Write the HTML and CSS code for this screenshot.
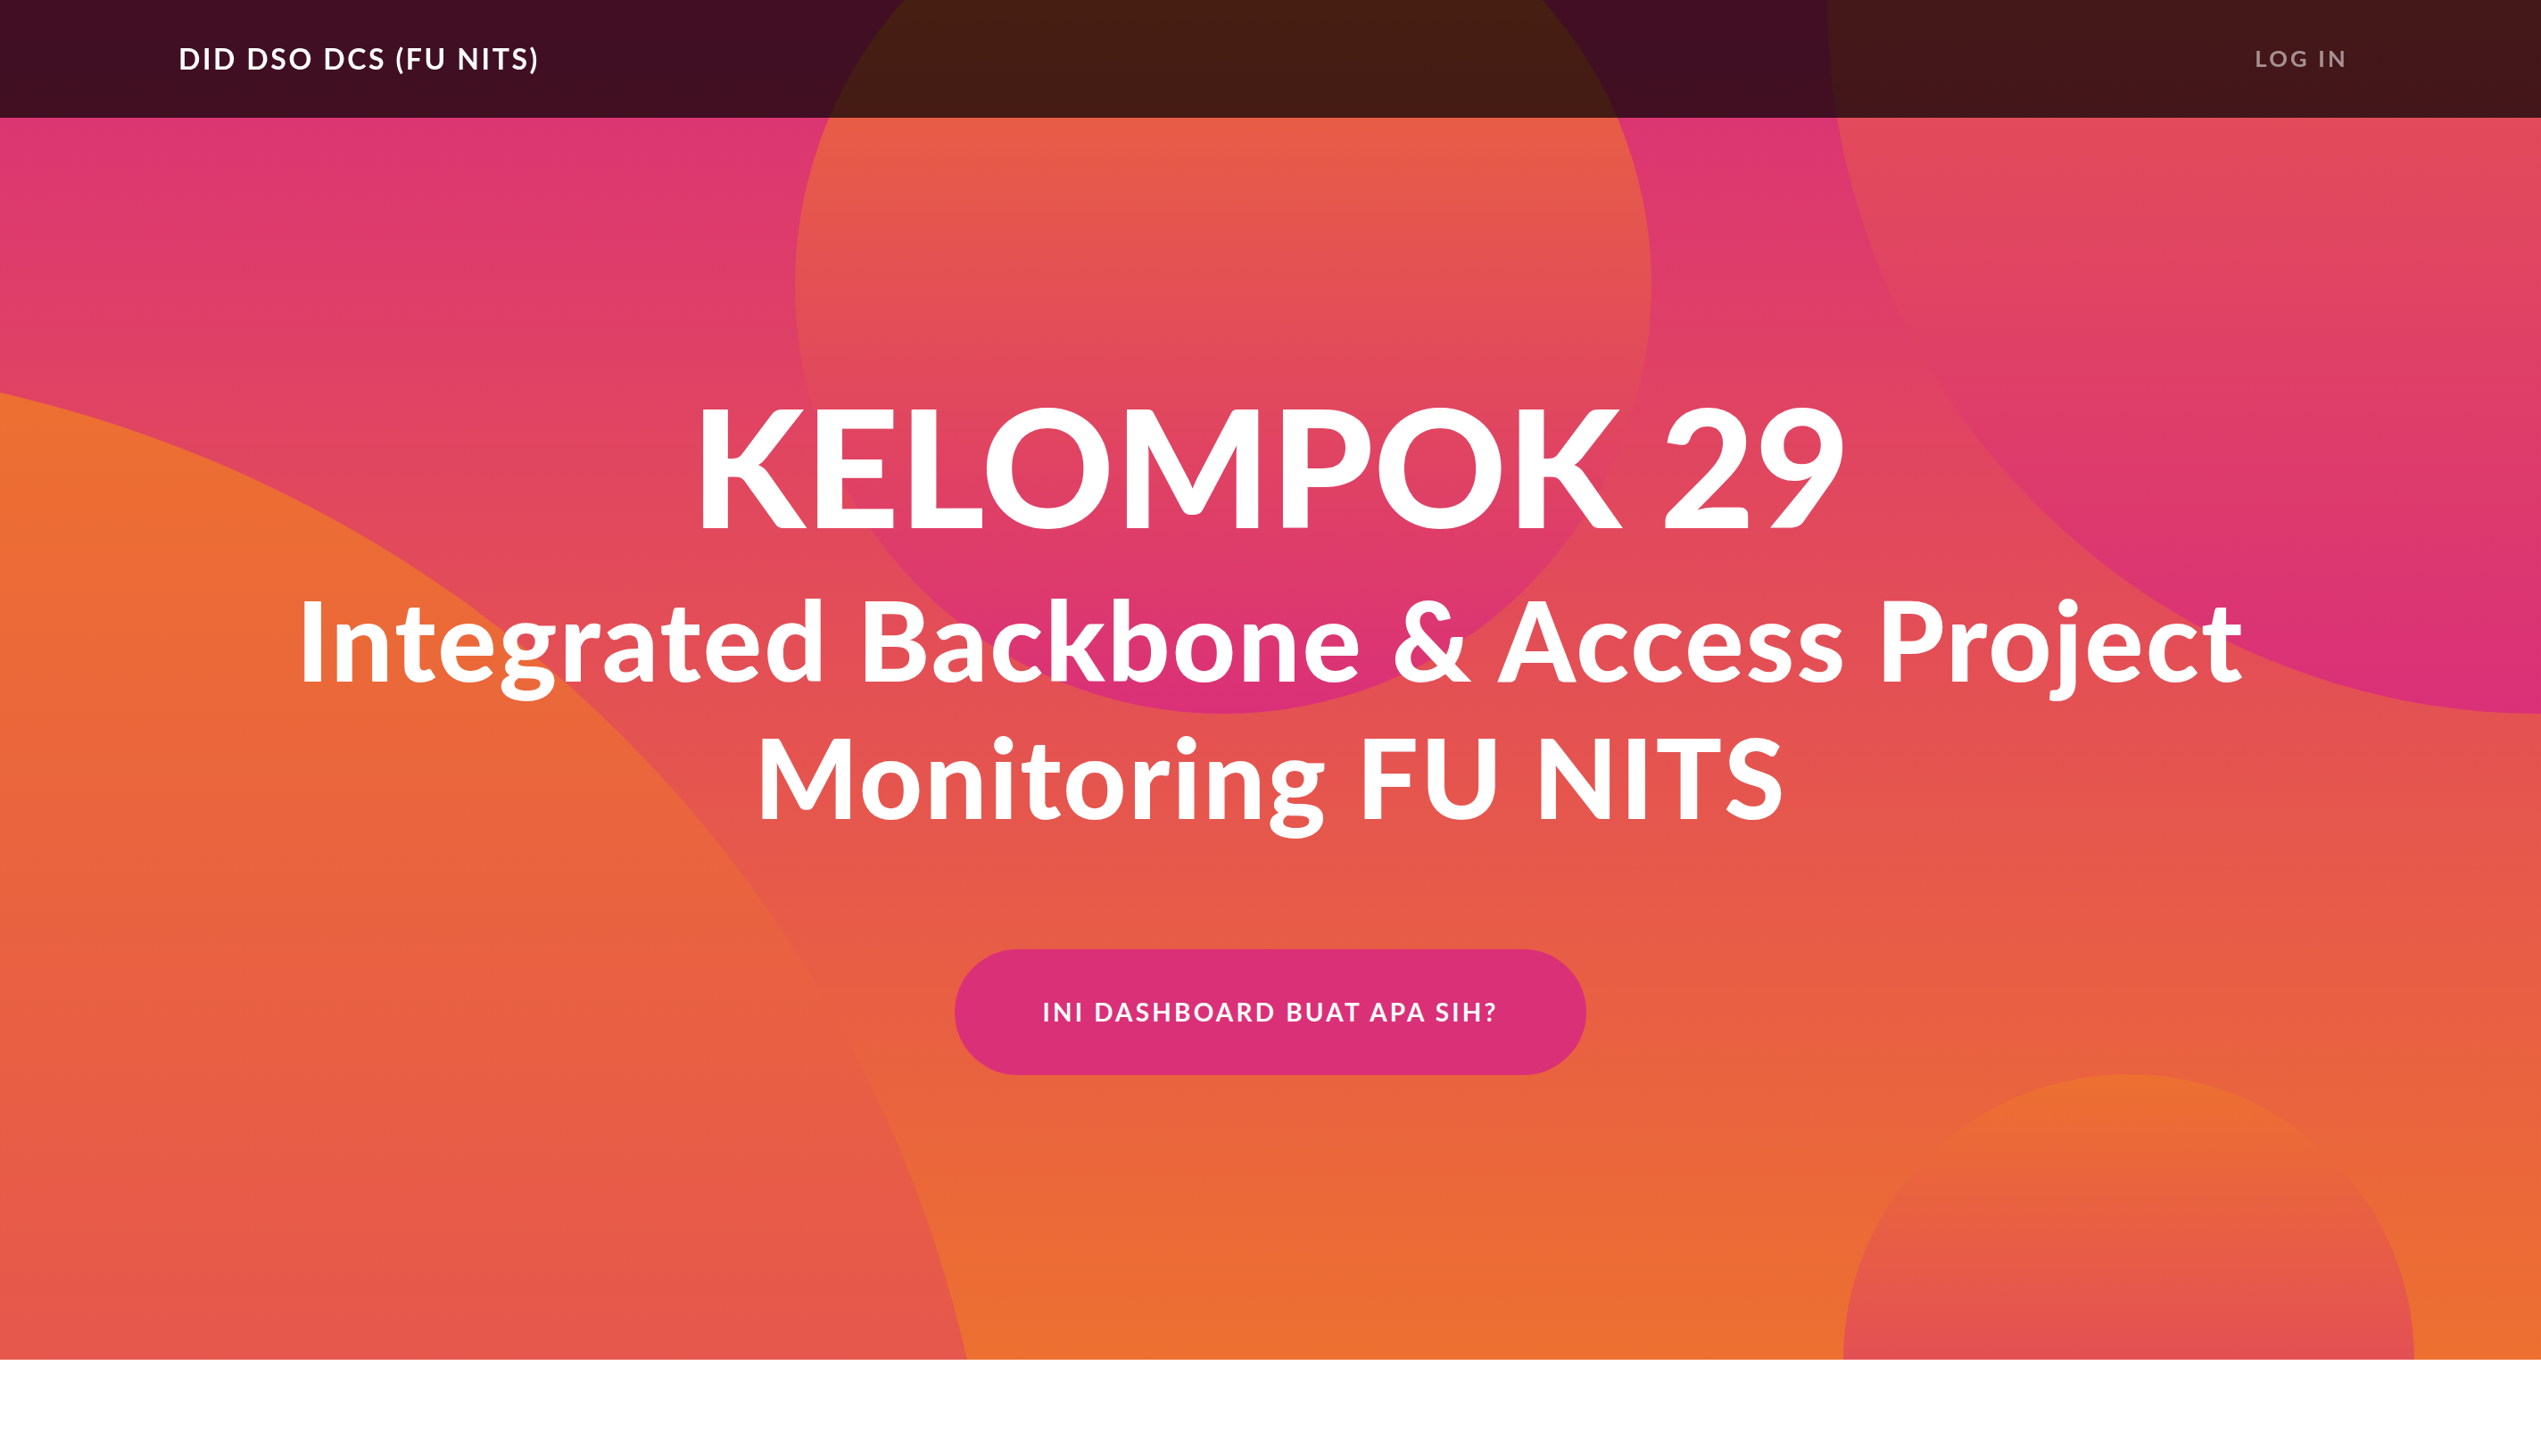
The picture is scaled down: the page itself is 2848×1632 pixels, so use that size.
FILE: index.html
```
<!DOCTYPE html>
<html lang="id">
<head>
<meta charset="utf-8">
<title>DID DSO DCS (FU NITS)</title>
<link rel="stylesheet" href="styles.css">
</head>
<body>
<nav class="navbar">
  <div class="navbar-inner">
    <a class="brand" href="#">DID DSO DCS (FU NITS)</a>
    <a class="nav-link" href="#">Log In</a>
  </div>
</nav>
<header class="masthead">
  <div class="masthead-content">
    <h1 class="masthead-heading">KELOMPOK 29</h1>
    <h2 class="masthead-subheading">Integrated Backbone &amp; Access Project<br>Monitoring FU NITS</h2>
    <a class="btn-xl" href="#">Ini Dashboard Buat Apa Sih?</a>
  </div>
  <div class="bg-circle bg-circle-1"></div>
  <div class="bg-circle bg-circle-2"></div>
  <div class="bg-circle bg-circle-3"></div>
  <div class="bg-circle bg-circle-4"></div>
</header>
</body>
</html>
```
FILE: styles.css
```
html, body {
  margin: 0;
  padding: 0;
  background: #ffffff;
  font-family: Lato, "Liberation Sans", sans-serif;
}

.navbar {
  position: fixed;
  top: 0;
  left: 0;
  right: 0;
  z-index: 10;
  height: 132px;
  background: rgba(0, 0, 0, 0.7);
}

.navbar-inner {
  max-width: 2640px;
  height: 100%;
  margin: 0 auto;
  padding: 0 96px;
  box-sizing: border-box;
  display: flex;
  align-items: center;
  justify-content: space-between;
}

.brand {
  color: #ffffff;
  text-decoration: none;
  font-weight: 700;
  font-size: 32px;
  letter-spacing: 2.6px;
  text-transform: uppercase;
  line-height: 1;
}

.nav-link {
  color: rgba(255, 255, 255, 0.52);
  text-decoration: none;
  font-weight: 700;
  font-size: 25.6px;
  letter-spacing: 3.2px;
  text-transform: uppercase;
  padding: 0 16px;
  line-height: 1;
}

.masthead {
  position: relative;
  overflow: hidden;
  box-sizing: border-box;
  height: 1524px;
  padding: 430px 0 320px;
  text-align: center;
  background: linear-gradient(0deg, #ed7030 0%, #da3078 100%);
}

.masthead-content {
  position: relative;
  z-index: 1;
  display: flex;
  flex-direction: column;
  align-items: center;
  margin-top: -20px;
}

.masthead-heading {
  margin: -4px 0 4px;
  color: #ffffff;
  font-weight: 900;
  font-size: 184px;
  line-height: 230.4px;
}

.masthead-subheading {
  margin: 0;
  color: #ffffff;
  font-weight: 900;
  font-size: 123px;
  line-height: 153.6px;
  letter-spacing: 2.5px;
}

.btn-xl {
  margin-top: 116px;
  height: 141px;
  padding: 0 98px;
  box-sizing: border-box;
  display: inline-flex;
  align-items: center;
  border-radius: 200px;
  background: #da3078;
  color: #ffffff;
  text-decoration: none;
  text-transform: uppercase;
  font-weight: 700;
  font-size: 28px;
  letter-spacing: 3.2px;
}

.bg-circle {
  position: absolute;
  z-index: 0;
  border-radius: 50%;
  background: linear-gradient(0deg, #da3078 0%, #ed7030 100%);
}

.bg-circle-1 {
  width: 2880px;
  height: 2880px;
  bottom: -1760px;
  left: -1760px;
}

.bg-circle-2 {
  width: 1600px;
  height: 1600px;
  top: -800px;
  right: -800px;
}

.bg-circle-3 {
  width: 640px;
  height: 640px;
  bottom: -320px;
  right: 5%;
}

.bg-circle-4 {
  width: 960px;
  height: 960px;
  top: -160px;
  right: 35%;
}
```
